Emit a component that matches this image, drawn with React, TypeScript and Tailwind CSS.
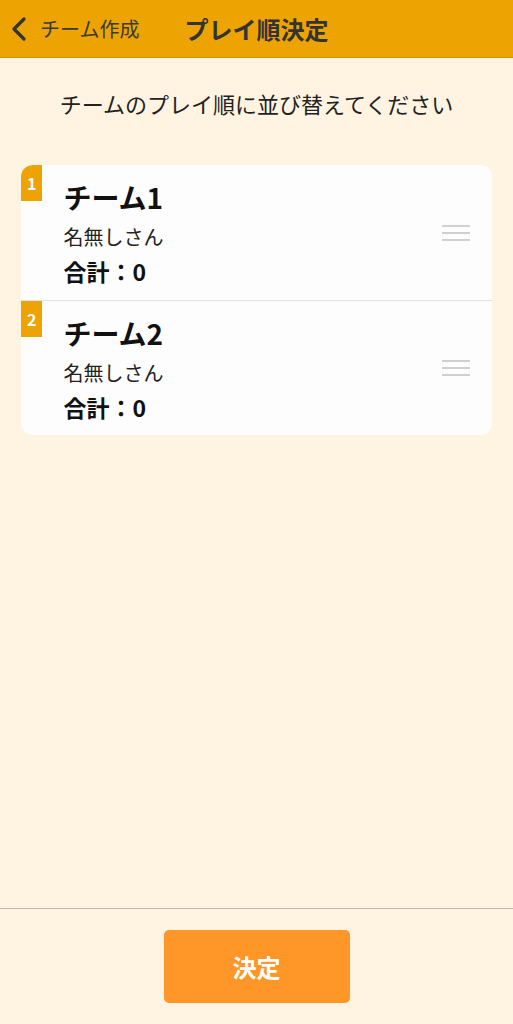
import React from "react";

const teams = [
  { no: 1, name: "チーム1", member: "名無しさん", total: 0 },
  { no: 2, name: "チーム2", member: "名無しさん", total: 0 },
];

const font = { fontFamily: '"Noto Sans CJK JP", "Noto Sans", sans-serif' };

const Grip = () => (
  <div className="flex flex-col gap-[5px] w-[28px]">
    <span className="block h-[2px] bg-[#d0d0d0]" />
    <span className="block h-[2px] bg-[#d0d0d0]" />
    <span className="block h-[2px] bg-[#d0d0d0]" />
  </div>
);

export default function App() {
  return (
    <div className="min-h-[1024px] w-full flex flex-col bg-[#fff4e1] text-[#111]" style={font}>
      <header className="h-[58px] bg-[#eda301] border-b border-[#d89400] grid grid-cols-[1fr_auto_1fr] items-center">
        <div className="flex items-center pl-[11px] text-[#3a3a3a]">
          <svg width="16" height="26" viewBox="0 0 16 26" fill="none">
            <path d="M13 3 L3 13 L13 23" stroke="#333" strokeWidth="3.2" strokeLinecap="round" strokeLinejoin="round" />
          </svg>
          <span className="ml-[13px] text-[20px] leading-none whitespace-nowrap">チーム作成</span>
        </div>
        <h1 className="text-[24px] font-bold text-[#333] leading-none">プレイ順決定</h1>
        <div />
      </header>

      <main className="flex-1 px-[21px]">
        <p className="mt-[31px] text-center text-[22px] leading-[28px] text-[#222]">
          チームのプレイ順に並び替えてください
        </p>

        <div className="mt-[48px] bg-[#fdfdfd] rounded-[12px] overflow-hidden">
          {teams.map((t, i) => (
            <div
              key={t.no}
              className={`flex items-start h-[135px] ${i > 0 ? "border-t border-[#e2e2e2]" : ""}`}
            >
              <div className="h-[36px] px-[6px] bg-[#eda301] text-white text-[16px] font-semibold flex items-center justify-center">
                {t.no}
              </div>
              <div className="ml-[21px] pt-[15px] flex-1">
                <div className="text-[28px] font-bold leading-[34px]">{t.name}</div>
                <div className="mt-[9px] text-[20px] leading-[28px] text-[#222]">{t.member}</div>
                <div className="mt-[5px] text-[23px] font-bold leading-[30px]">合計：{t.total}</div>
              </div>
              <div className="self-center pr-[22px]">
                <Grip />
              </div>
            </div>
          ))}
        </div>
      </main>

      <footer className="border-t border-[#c4b9a8] pt-[21px] pb-[21px] flex justify-center">
        <button className="w-[186px] h-[73px] rounded-[5px] bg-[#ff9628] text-white text-[24px] font-bold">
          決定
        </button>
      </footer>
    </div>
  );
}
